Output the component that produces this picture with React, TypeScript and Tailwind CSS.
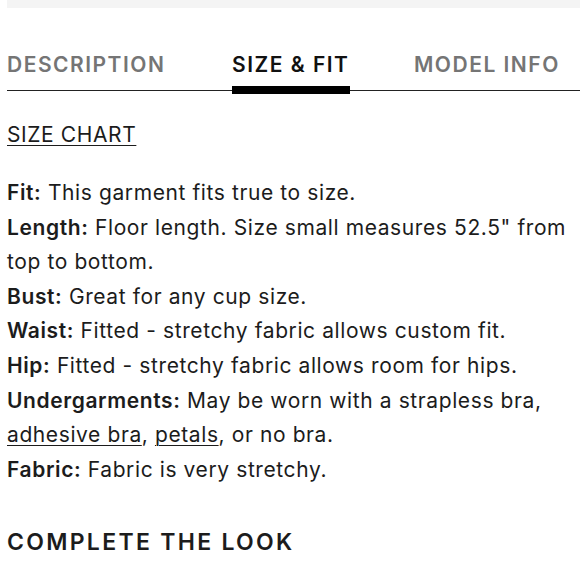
import React from 'react';

const App = () => {
  const rows = [
    { label: 'Fit:', text: 'This garment fits true to size.' },
    { label: 'Length:', text: 'Floor length. Size small measures 52.5" from top to bottom.' },
    { label: 'Bust:', text: 'Great for any cup size.' },
    { label: 'Waist:', text: 'Fitted - stretchy fabric allows custom fit.' },
    { label: 'Hip:', text: 'Fitted - stretchy fabric allows room for hips.' },
  ];

  return (
    <div className="w-[580px] h-[580px] overflow-hidden bg-white text-[#1c1c1c] font-['Inter',sans-serif]">
      {/* top strip */}
      <div className="ml-[7px] h-[8px] bg-[#f4f4f4]" />

      {/* Tabs */}
      <div className="mt-[46px] ml-[7px] relative border-b border-[#222]">
        <div className="flex items-end text-[21px] font-semibold tracking-[1.5px] leading-none pb-[15px]">
          <div className="text-[#757575] w-[225px]">DESCRIPTION</div>
          <div className="text-[#111] w-[182px]">SIZE &amp; FIT</div>
          <div className="text-[#757575]">MODEL INFO</div>
        </div>
        <div className="absolute left-[225px] w-[118px] bottom-[-4px] h-[8px] bg-black" />
      </div>

      {/* Content */}
      <div className="ml-[7px] text-[21px] tracking-[0.6px]">
        <div className="mt-[32px] leading-[24px] underline underline-offset-[3px] decoration-1">SIZE CHART</div>

        <div className="mt-[29px] leading-[34.6px]">
          {rows.map((r, i) => (
            <div key={i}>
              <span className="font-semibold">{r.label}</span> {r.text}
            </div>
          ))}
          <div>
            <span className="font-semibold">Undergarments:</span> May be worn with a strapless bra,{' '}
            <span className="underline underline-offset-[3px] decoration-1">adhesive bra</span>,{' '}
            <span className="underline underline-offset-[3px] decoration-1">petals</span>, or no bra.
          </div>
          <div>
            <span className="font-semibold">Fabric:</span> Fabric is very stretchy.
          </div>
        </div>

        <div className="mt-[44px] text-[23px] font-semibold tracking-[2.3px] leading-none">COMPLETE THE LOOK</div>
      </div>
    </div>
  );
};

export default App;
